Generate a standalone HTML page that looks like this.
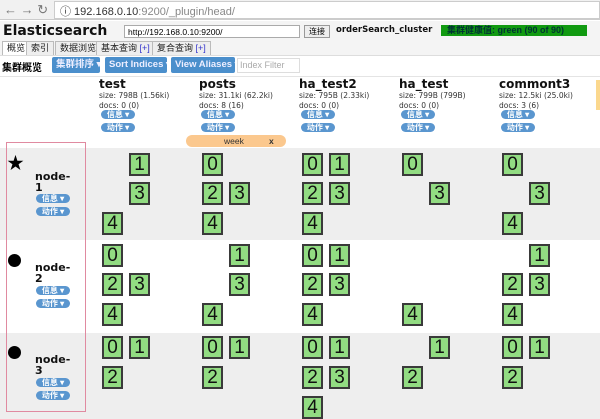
<!DOCTYPE html>
<html><head><meta charset="utf-8"><style>
*{margin:0;padding:0;box-sizing:border-box}
body{width:600px;height:419px;overflow:hidden;background:#fff;font-family:"Liberation Sans","Noto Sans CJK SC",sans-serif;position:relative}
.a{position:absolute;white-space:nowrap}
.s{position:absolute;width:21px;height:23px;background:#92dc82;border:2px solid #3a3a3a;font-size:19px;line-height:19px;text-align:center;color:#111}
.pill{position:absolute;height:9px;width:34px;border-radius:5px;background:#5a96cf;color:#fff;font-size:8px;line-height:9px;text-align:center;font-weight:bold;white-space:nowrap}
.btn{position:absolute;top:57px;height:16px;background:#4b8fcc;color:#eef;font-size:9.5px;font-weight:bold;line-height:16px;padding-left:4px;border-radius:2px;white-space:nowrap;overflow:hidden}
.ih{position:absolute;font-family:"DejaVu Sans",sans-serif;font-size:7.5px;color:#333;line-height:10px;white-space:nowrap}
.it{position:absolute;font-family:"DejaVu Sans",sans-serif;font-weight:bold;font-size:12px;color:#111;white-space:nowrap}
.nd{position:absolute;left:35px;font-family:"DejaVu Sans",sans-serif;font-weight:bold;font-size:11px;line-height:11px;color:#111}
.tab{position:absolute;top:41px;height:14px;border:1px solid #bbb;border-bottom:none;background:#eee;font-size:9px;line-height:13px;padding:0 4px;color:#222;white-space:nowrap}
</style></head><body>
<div class="a" style="left:0;top:0;width:600px;height:20px;background:#f1f1f1;border-bottom:1px solid #ccc"></div>
<div class="a" style="left:4px;top:2px;font-size:13px;color:#777">&#8592; &#8594; &#8635;</div>
<div class="a" style="left:54px;top:1px;width:546px;height:18px;background:#fff;border:1px solid #ccc"></div>
<div class="a" style="left:60px;top:3px;font-size:11px;color:#333">&#9432; 192.168.0.10<span style="color:#888">:9200/_plugin/head/</span></div>
<div class="a" style="left:0;top:21px;width:600px;height:34px;background:#f4f4f4"></div>
<div class="a" style="left:3px;top:23px;font-family:'DejaVu Sans',sans-serif;font-weight:bold;font-size:14px;color:#111">Elasticsearch</div>
<div class="a" style="left:124px;top:25px;width:176px;height:13px;background:#fff;border:1px solid #aaa;font-size:8.5px;line-height:12px;padding-left:3px">http://192.168.0.10:9200/</div>
<div class="a" style="left:304px;top:25px;width:26px;height:13px;background:#eee;border:1px solid #999;font-size:8px;line-height:11px;text-align:center">连接</div>
<div class="a" style="left:336px;top:25px;font-family:'DejaVu Sans',sans-serif;font-weight:bold;font-size:8.5px;color:#111">orderSearch_cluster</div>
<div class="a" style="left:441px;top:25px;width:146px;height:11px;background:#119a11;font-size:9px;line-height:11px;color:#033;padding-left:6px;font-weight:bold">集群健康值: green (90 of 90)</div>
<div class="tab" style="left:2px;background:#fff">概览</div>
<div class="tab" style="left:26px">索引</div>
<div class="tab" style="left:55px">数据浏览</div>
<div class="tab" style="left:96px">基本查询 <span style="color:#33c">[+]</span></div>
<div class="tab" style="left:152px">复合查询 <span style="color:#33c">[+]</span></div>
<div class="a" style="left:0;top:55px;width:600px;height:21px;background:#fff;border-top:1px solid #ddd"></div>
<div class="a" style="left:2px;top:59px;font-size:10px;font-weight:bold">集群概览</div>
<div class="btn" style="left:52px;width:48px">集群排序 ▾</div>
<div class="btn" style="left:105px;width:62px">Sort Indices ▾</div>
<div class="btn" style="left:171px;width:64px">View Aliases ▾</div>
<div class="a" style="left:237px;top:58px;width:63px;height:15px;border:1px solid #ddd;font-size:9px;color:#aaa;line-height:13px;padding-left:2px">Index Filter</div>
<div class="a" style="left:0;top:76px;width:600px;height:1px;background:#e4e4e4"></div>

<div class="a" style="left:0;top:148px;width:600px;height:92px;background:#eeeeee"></div>
<div class="a" style="left:0;top:333px;width:600px;height:86px;background:#eeeeee"></div>
<div class="a" style="left:186px;top:135px;width:100px;height:12px;background:#fbc88e;border-radius:6px;font-size:8.5px;line-height:12px;color:#333"><span style="position:absolute;left:38px">week</span><span style="position:absolute;left:83px;font-weight:bold">x</span></div>

<div class="it" style="left:99px;top:77px">test</div><div class="ih" style="left:99px;top:91px">size: 798B (1.56ki)<br>docs: 0 (0)</div>
<div class="it" style="left:199px;top:77px">posts</div><div class="ih" style="left:199px;top:91px">size: 31.1ki (62.2ki)<br>docs: 8 (16)</div>
<div class="it" style="left:299px;top:77px">ha_test2</div><div class="ih" style="left:299px;top:91px">size: 795B (2.33ki)<br>docs: 0 (0)</div>
<div class="it" style="left:399px;top:77px">ha_test</div><div class="ih" style="left:399px;top:91px">size: 799B (799B)<br>docs: 0 (0)</div>
<div class="it" style="left:499px;top:77px">commont3</div><div class="ih" style="left:499px;top:91px">size: 12.5ki (25.0ki)<br>docs: 3 (6)</div>
<div class="pill" style="left:101px;top:110px">信息 ▾</div><div class="pill" style="left:101px;top:123px">动作 ▾</div>
<div class="pill" style="left:201px;top:110px">信息 ▾</div><div class="pill" style="left:201px;top:123px">动作 ▾</div>
<div class="pill" style="left:301px;top:110px">信息 ▾</div><div class="pill" style="left:301px;top:123px">动作 ▾</div>
<div class="pill" style="left:401px;top:110px">信息 ▾</div><div class="pill" style="left:401px;top:123px">动作 ▾</div>
<div class="pill" style="left:501px;top:110px">信息 ▾</div><div class="pill" style="left:501px;top:123px">动作 ▾</div>
<div class="a" style="left:596px;top:80px;width:4px;height:30px;background:#fbd88e"></div>

<div class="a" style="left:6px;top:142px;width:80px;height:270px;border:1px solid #e08aa0"></div>
<div class="a" style="left:7px;top:155px;font-size:17px;line-height:17px">★</div>
<div class="nd" style="top:171px">node-<br>1</div>
<div class="pill" style="left:36px;top:194px">信息 ▾</div><div class="pill" style="left:36px;top:207px">动作 ▾</div>
<div class="a" style="left:8px;top:254px;width:13px;height:13px;border-radius:50%;background:#000"></div>
<div class="nd" style="top:262px">node-<br>2</div>
<div class="pill" style="left:36px;top:286px">信息 ▾</div><div class="pill" style="left:36px;top:299px">动作 ▾</div>
<div class="a" style="left:8px;top:346px;width:13px;height:13px;border-radius:50%;background:#000"></div>
<div class="nd" style="top:354px">node-<br>3</div>
<div class="pill" style="left:36px;top:378px">信息 ▾</div><div class="pill" style="left:36px;top:391px">动作 ▾</div>

<div class="s" style="left:129px;top:153px">1</div><div class="s" style="left:129px;top:182px">3</div><div class="s" style="left:102px;top:212px">4</div>
<div class="s" style="left:202px;top:153px">0</div><div class="s" style="left:202px;top:182px">2</div><div class="s" style="left:229px;top:182px">3</div><div class="s" style="left:202px;top:212px">4</div>
<div class="s" style="left:302px;top:153px">0</div><div class="s" style="left:329px;top:153px">1</div><div class="s" style="left:302px;top:182px">2</div><div class="s" style="left:329px;top:182px">3</div><div class="s" style="left:302px;top:212px">4</div>
<div class="s" style="left:402px;top:153px">0</div><div class="s" style="left:429px;top:182px">3</div>
<div class="s" style="left:502px;top:153px">0</div><div class="s" style="left:529px;top:182px">3</div><div class="s" style="left:502px;top:212px">4</div>
<div class="s" style="left:102px;top:244px">0</div><div class="s" style="left:102px;top:273px">2</div><div class="s" style="left:129px;top:273px">3</div><div class="s" style="left:102px;top:303px">4</div>
<div class="s" style="left:229px;top:244px">1</div><div class="s" style="left:229px;top:273px">3</div><div class="s" style="left:202px;top:303px">4</div>
<div class="s" style="left:302px;top:244px">0</div><div class="s" style="left:329px;top:244px">1</div><div class="s" style="left:302px;top:273px">2</div><div class="s" style="left:329px;top:273px">3</div><div class="s" style="left:302px;top:303px">4</div>
<div class="s" style="left:402px;top:303px">4</div>
<div class="s" style="left:529px;top:244px">1</div><div class="s" style="left:502px;top:273px">2</div><div class="s" style="left:529px;top:273px">3</div><div class="s" style="left:502px;top:303px">4</div>
<div class="s" style="left:102px;top:336px">0</div><div class="s" style="left:129px;top:336px">1</div><div class="s" style="left:102px;top:366px">2</div>
<div class="s" style="left:202px;top:336px">0</div><div class="s" style="left:229px;top:336px">1</div><div class="s" style="left:202px;top:366px">2</div>
<div class="s" style="left:302px;top:336px">0</div><div class="s" style="left:329px;top:336px">1</div><div class="s" style="left:302px;top:366px">2</div><div class="s" style="left:329px;top:366px">3</div><div class="s" style="left:302px;top:396px">4</div>
<div class="s" style="left:429px;top:336px">1</div><div class="s" style="left:402px;top:366px">2</div>
<div class="s" style="left:502px;top:336px">0</div><div class="s" style="left:529px;top:336px">1</div><div class="s" style="left:502px;top:366px">2</div>
</body></html>
